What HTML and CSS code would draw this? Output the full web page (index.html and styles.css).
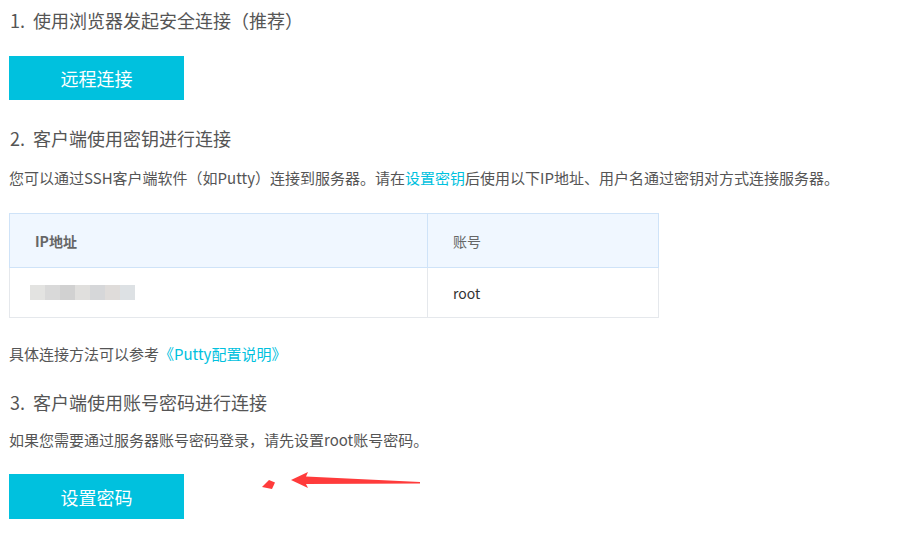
FILE: index.html
```html
<!DOCTYPE html>
<html lang="zh-CN">
<head>
  <meta charset="UTF-8">
  <title>远程连接</title>
  <link rel="stylesheet" href="styles.css">
</head>
<body>
  <div class="connect-panel">
    <h3 class="step-title step-first"><span class="step-num">1.</span>使用浏览器发起安全连接（推荐）</h3>
    <button class="action-button">远程连接</button>

    <h3 class="step-title"><span class="step-num">2.</span>客户端使用密钥进行连接</h3>
    <p class="step-text">您可以通过SSH客户端软件（如Putty）连接到服务器。请在<a href="#">设置密钥</a>后使用以下IP地址、用户名通过密钥对方式连接服务器。</p>
    <table class="info-table">
      <thead>
        <tr>
          <th class="col-ip">IP地址</th>
          <th>账号</th>
        </tr>
      </thead>
      <tbody>
        <tr>
          <td><span class="ip-blur"><i></i><i></i><i></i><i></i><i></i><i></i><i></i></span></td>
          <td>root</td>
        </tr>
      </tbody>
    </table>
    <p class="step-text step-note">具体连接方法可以参考<a href="#">《Putty配置说明》</a></p>

    <h3 class="step-title"><span class="step-num">3.</span>客户端使用账号密码进行连接</h3>
    <p class="step-text step-short">如果您需要通过服务器账号密码登录，请先设置root账号密码。</p>
    <button class="action-button action-last">设置密码</button>
  </div>

  <!-- red annotation arrow -->
  <svg class="mark-arrow" width="180" height="30" viewBox="250 465 180 30">
    <polygon fill="#ff3b3b" points="291,480 308,472 306,476.5 420,482 420,483.5 306,484 308,488"/>
    <polygon fill="#ff3b3b" points="262,487 269,480 275,482.5 272,489"/>
  </svg>
</body>
</html>
```

FILE: styles.css
```css
body {
  margin: 0;
  background: #fff;
  color: #555;
  font-family: "Noto Sans CJK SC", "Noto Sans", sans-serif;
}
.connect-panel {
  padding-left: 9px;
}
.step-title {
  margin: 26px 0 0;
  font-size: 18px;
  line-height: 24px;
  font-weight: normal;
  color: #555;
}
.step-num {
  display: inline-block;
  width: 23px;
  padding-left: 1px;
}
.step-first {
  margin-top: 8px;
}
.action-button {
  display: block;
  margin-top: 24px;
  width: 175px;
  height: 44px;
  border: none;
  background-color: #00c1de;
  color: #fff;
  font-family: inherit;
  font-size: 18px;
  cursor: pointer;
}
.action-last {
  height: 45px;
}
.step-text {
  margin: 18px 0 0;
  font-size: 15px;
  line-height: 20px;
  color: #555;
}
.step-text a {
  color: #00c1de;
  text-decoration: none;
}
.step-note {
  margin-top: 26px;
}
.step-short {
  margin-top: 16px;
}
.info-table {
  margin-top: 25px;
  width: 650px;
  border-collapse: collapse;
  font-size: 14px;
}
.info-table th {
  height: 53px;
  padding: 0 0 0 25px;
  text-align: left;
  font-weight: bold;
  color: #666;
  background: #f0f7ff;
  border: 1px solid #cfe3f8;
}
.info-table th + th {
  font-weight: normal;
}
.info-table td {
  height: 49px;
  padding: 0 0 0 25px;
  color: #333;
  border: 1px solid #e5e8ec;
  border-top: none;
}
.info-table .col-ip {
  width: 392px;
}
.ip-blur {
  display: flex;
  margin-left: -5px;
  height: 15px;
}
.ip-blur i {
  width: 15px;
  height: 15px;
  background: #dcdcdc;
}
.ip-blur i:nth-child(1) { background: #e3e3e1; }
.ip-blur i:nth-child(2) { background: #d9d9d9; }
.ip-blur i:nth-child(3) { background: #d1d1d1; }
.ip-blur i:nth-child(4) { background: #e0dfdd; }
.ip-blur i:nth-child(5) { background: #d6d7d9; }
.ip-blur i:nth-child(6) { background: #dfdcda; }
.ip-blur i:nth-child(7) { background: #dde1e4; }
.mark-arrow {
  position: absolute;
  left: 250px;
  top: 465px;
}
```
